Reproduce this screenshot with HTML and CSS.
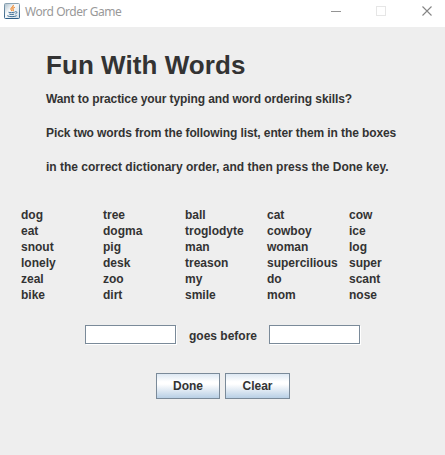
FILE: index.html
```
<!DOCTYPE html>
<html lang="en">
<head>
<meta charset="utf-8">
<title>Word Order Game</title>
<link rel="stylesheet" href="styles.css">
</head>
<body>
<header class="titlebar">
  <svg class="app-icon" width="16" height="16" viewBox="0 0 16 16">
    <defs><linearGradient id="frame" x1="0" y1="0" x2="0" y2="1"><stop offset="0" stop-color="#8ba3b3"/><stop offset="1" stop-color="#305f87"/></linearGradient>
    <linearGradient id="face" x1="0" y1="0" x2="1" y2="1"><stop offset="0" stop-color="#a9bdca"/><stop offset=".4" stop-color="#f8fafb"/><stop offset="1" stop-color="#d5e0e8"/></linearGradient></defs>
    <rect x=".5" y=".5" width="15" height="15" rx="1" fill="url(#face)" stroke="url(#frame)"/>
    <path d="M9.300 2c.7 2-3.300 2.800-2.300 4.500l1 1.300M10.800 4.300c-2 .8-2.600 1.300-1.600 2.300.4.500.1 1-.4 1.300" fill="none" stroke="#ee8a32" stroke-width="1.200"/>
    <path d="M4.500 9.200c1.500.7 4.500.5 6.200 0M5.300 11.200c1.500.5 3.500.4 4.800 0M3.300 12.700c2 1.400 7.500 1.200 9.400 0M11.200 8.700c2.300-.4 2 1.500.3 2.200" fill="none" stroke="#3f6e94"/>
  </svg>
  <h1 class="window-title">Word Order Game</h1>
  <svg class="window-controls" width="102" height="12" viewBox="0 0 102 12">
    <path d="M0 6.500h10" stroke="#949494"/>
    <rect x="45.500" y="1.500" width="9" height="9" fill="none" stroke="#e6e6e6"/>
    <path d="M91.500 1.500l9 9M100.500 1.500l-9 9" stroke="#858585" stroke-width="1.100"/>
  </svg>
</header>
<main class="content">
  <section class="intro">
    <h2 class="heading">Fun With Words</h2>
    <p class="line question">Want to practice your typing and word ordering skills?</p>
    <p class="line rule">Pick two words from the following list, enter them in the boxes</p>
    <p class="line">in the correct dictionary order, and then press the Done key.</p>
  </section>
  <section class="words">
    <span>dog</span><span>tree</span><span>ball</span><span>cat</span><span>cow</span>
    <span>eat</span><span>dogma</span><span>troglodyte</span><span>cowboy</span><span>ice</span>
    <span>snout</span><span>pig</span><span>man</span><span>woman</span><span>log</span>
    <span>lonely</span><span>desk</span><span>treason</span><span>supercilious</span><span>super</span>
    <span>zeal</span><span>zoo</span><span>my</span><span>do</span><span>scant</span>
    <span>bike</span><span>dirt</span><span>smile</span><span>mom</span><span>nose</span>
  </section>
  <section class="answer">
    <input class="field" type="text" aria-label="First word">
    <span class="between">goes before</span>
    <input class="field" type="text" aria-label="Second word">
  </section>
  <section class="actions">
    <button class="button done">Done</button>
    <button class="button clear">Clear</button>
  </section>
</main>
</body>
</html>
```
FILE: styles.css
```
* { box-sizing: border-box; }
body {
  margin: 0;
  height: 455px;
  overflow: hidden;
  background: #eee;
  color: #333;
  font: bold 12px/16px "Liberation Sans", Arial, sans-serif;
}
.titlebar {
  display: flex;
  height: 27px;
  padding: 3px 12px 0 4px;
  background: #fff;
}
.app-icon { flex: none; }
.window-title {
  margin: 0 auto 0 5px;
  color: #999;
  font: 12px/18px "Noto Sans", sans-serif;
  letter-spacing: -0.45px;
  white-space: nowrap;
}
.window-controls { margin-top: 2px; }
.intro { padding: 18px 0 0 46px; white-space: nowrap; }
.heading { margin: 0; font-size: 26px; line-height: 40px; letter-spacing: 0.06px; }
.line { margin: 0 0 18px; }
.question { margin-top: 6px; letter-spacing: -0.09px; }
.rule { letter-spacing: -0.105px; }
.words {
  display: grid;
  grid-template-columns: repeat(5, 82px);
  grid-auto-rows: 16px;
  margin: 32px 0 0 21px;
}
.answer {
  display: flex;
  align-items: center;
  margin: 21px 0 0 85px;
}
.field {
  width: 91px;
  height: 19px;
  padding: 0 2px;
  border: 1px solid #7a8a99;
  border-radius: 0;
  outline: none;
  background: #fff;
  box-shadow: 1px 1px #fff;
  font: 12px "Liberation Sans", Arial, sans-serif;
}
.between { width: 93px; padding: 4px 0 0 13px; white-space: nowrap; }
.actions { display: flex; gap: 5px; margin: 29px 0 0 156px; }
.button {
  height: 26px;
  padding: 0;
  border: 1px solid #7a8a99;
  border-radius: 0;
  background: linear-gradient(#dde8f3 0%, #fff 32%, #fff 42%, #b8cfe5 100%);
  color: #333;
  font: inherit;
}
.done { width: 64px; }
.clear { width: 65px; }
```
